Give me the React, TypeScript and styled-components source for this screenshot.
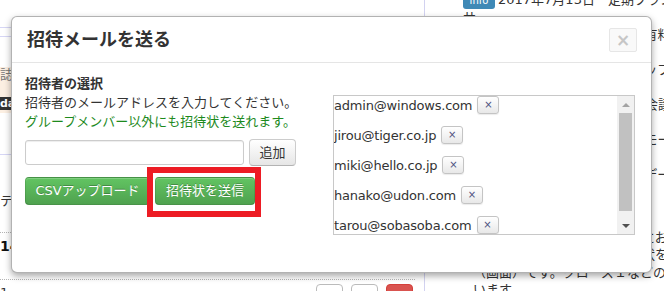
import React from "react";
import styled, { createGlobalStyle } from "styled-components";

const GlobalStyle = createGlobalStyle`
  html, body {
    margin: 0;
    padding: 0;
  }
  body {
    width: 664px;
    height: 291px;
    overflow: hidden;
    background: #fff;
    color: #333;
    font-family: "DejaVu Sans", "Noto Sans CJK JP", sans-serif;
    font-size: 13px;
  }
  * {
    box-sizing: border-box;
  }
`;

/* ---------- page behind the dialog ---------- */

const Page = styled.div`
  position: relative;
  width: 664px;
  height: 291px;
  overflow: hidden;
  display: flex;
`;

const LeftPane = styled.div`
  flex: none;
  box-sizing: content-box;
  width: 415px;
  padding-right: 9px;
  border-right: 1px solid #d2d2f0;
`;

const HeadRow = styled.div`
  height: 28px;
  border-bottom: 1px solid #d6d6f5;
`;

const SubRow = styled.div`
  height: 9px;
  border-bottom: 1px solid #d6d6f5;
`;

const NoticeBlock = styled.div`
  margin-top: 30px;
  height: 46px;
  background: #fcefe2;
`;

const NoticeText = styled.div`
  line-height: 16px;
  color: #777;
  white-space: nowrap;
`;

const DarkTag = styled.span`
  display: inline-block;
  margin-top: 14px;
  padding: 0 4px 0 0;
  height: 13px;
  line-height: 13px;
  font-size: 11px;
  font-weight: bold;
  background: #333;
  color: #fff;
`;

const SectionRow = styled.div`
  height: 42px;
  border-bottom: 1px solid #d6d6f5;
`;

const TopicRow = styled.div<{ $height: number; $pad: number }>`
  height: ${(p) => p.$height}px;
  padding-top: ${(p) => p.$pad}px;
  border-bottom: 1px dotted #b5b5b5;
  line-height: 17px;
  white-space: nowrap;
  overflow: hidden;
`;

const CountText = styled.span`
  font-size: 14px;
  font-weight: bold;
  color: #111;
`;

const LastRow = styled.div`
  display: flex;
  justify-content: space-between;
  padding-top: 4px;
  line-height: 17px;
`;

const RowTools = styled.div`
  display: flex;
  gap: 8px;
  margin-right: 2px;
`;

const ToolButton = styled.span<{ $danger?: boolean }>`
  width: 27px;
  height: 22px;
  border-radius: 4px;
  border: 1px solid ${(p) => (p.$danger ? "#d43f3a" : "#bbb")};
  background: ${(p) => (p.$danger ? "#d9534f" : "#fff")};
`;

const RightPane = styled.div`
  flex: 1;
  min-width: 0;
  overflow: hidden;
  padding-left: 38px;
`;

const NewsBlock = styled.div<{ $offset: number; $indent?: number }>`
  margin-top: ${(p) => p.$offset}px;
  padding-left: ${(p) => p.$indent ?? 0}px;
  line-height: 17.5px;
  color: #333;
`;

const NewsLine = styled.div`
  white-space: nowrap;
  height: 17.5px;
`;

const InfoBadge = styled.span`
  display: inline-block;
  vertical-align: middle;
  width: 32px;
  height: 16px;
  margin-right: 3px;
  border-radius: 3px;
  background: #3f89b6;
  color: #fff;
  font-size: 10px;
  line-height: 16px;
  text-align: center;
`;

/* ---------- dialog ---------- */

const Modal = styled.div`
  position: absolute;
  left: 11px;
  top: 16px;
  width: 641px;
  height: 257px;
  background: #fff;
  border: 1px solid rgba(0, 0, 0, 0.3);
  border-radius: 6px;
  box-shadow: 0 3px 7px rgba(0, 0, 0, 0.35);
`;

const ModalHeader = styled.div`
  height: 46px;
  display: flex;
  align-items: center;
  justify-content: space-between;
  padding: 0 14px 0 15px;
  border-bottom: 1px solid #e5e5e5;
`;

const ModalTitle = styled.h3`
  margin: 0;
  font-size: 18px;
  font-weight: bold;
  line-height: 24px;
  color: #333;
`;

const CloseButton = styled.button`
  width: 28px;
  height: 24px;
  padding: 0;
  border: 1px solid #e6e6e6;
  border-radius: 2px;
  background: #f9f9f9;
  color: #c6c6c6;
  font-family: "DejaVu Sans", sans-serif;
  font-size: 17px;
  font-weight: bold;
  line-height: 20px;
`;

const ModalBody = styled.div`
  display: flex;
  padding: 11px 0 0 13px;
`;

const FormColumn = styled.div`
  flex: 0 0 308px;
`;

const SectionTitle = styled.div`
  font-weight: bold;
  line-height: 19px;
`;

const HelpText = styled.div<{ $tone?: "green" }>`
  line-height: 19px;
  white-space: nowrap;
  color: ${(p) => (p.$tone === "green" ? "#1d8a1d" : "#333")};
`;

const InputRow = styled.div`
  display: flex;
  align-items: center;
  gap: 5px;
  margin-top: 8px;
`;

const EmailInput = styled.input`
  width: 219px;
  height: 25px;
  padding: 2px 6px;
  border: 1px solid #ccc;
  border-radius: 3px;
  box-shadow: inset 0 1px 1px rgba(0, 0, 0, 0.075);
  font: inherit;
`;

const GrayButton = styled.button`
  width: 47px;
  height: 27px;
  padding: 0;
  border: 1px solid #ccc;
  border-bottom-color: #b3b3b3;
  border-radius: 4px;
  background: linear-gradient(#ffffff, #e6e6e6);
  color: #333;
  font: inherit;
  line-height: 25px;
`;

const ActionRow = styled.div`
  display: flex;
  gap: 5px;
  margin-top: 11px;
`;

const GreenButton = styled.button<{ $width: number }>`
  width: ${(p) => p.$width}px;
  height: 28px;
  padding: 0;
  border: 1px solid;
  border-color: rgba(0, 0, 0, 0.1) rgba(0, 0, 0, 0.1) rgba(0, 0, 0, 0.25);
  border-radius: 4px;
  background: linear-gradient(#62c462, #4fa24f);
  box-shadow: inset 0 1px 0 rgba(255, 255, 255, 0.2);
  color: #fff;
  text-shadow: 0 -1px 0 rgba(0, 0, 0, 0.25);
  font: inherit;
  line-height: 26px;
  white-space: nowrap;
`;

const Marked = styled.div`
  position: relative;
`;

const Highlight = styled.span`
  position: absolute;
  left: -8px;
  top: -10px;
  width: 114px;
  height: 50px;
  border: 6px solid #ed1c24;
  pointer-events: none;
`;

const ListBox = styled.div`
  display: flex;
  width: 302px;
  height: 140px;
  margin-top: 21px;
  border: 1px solid #c8c8c8;
`;

const EmailList = styled.div`
  flex: 1;
  overflow: hidden;
`;

const EmailRow = styled.div`
  display: flex;
  align-items: center;
  height: 18px;
  margin-bottom: 12px;
  white-space: nowrap;
  letter-spacing: -0.2px;
`;

const RemoveButton = styled.button`
  width: 22px;
  height: 18px;
  margin-left: 5px;
  padding: 0;
  border: 1px solid #c4c4c4;
  border-radius: 3px;
  background: linear-gradient(#ffffff, #e8e8e8);
  box-shadow: 0 1px 1px rgba(0, 0, 0, 0.08);
  color: #4d5080;
  font-family: "DejaVu Sans", sans-serif;
  font-size: 10px;
  line-height: 16px;
  letter-spacing: 0;
`;

const ScrollBar = styled.div`
  flex: 0 0 17px;
  display: flex;
  flex-direction: column;
  background: #f1f1f1;
`;

const ArrowCell = styled.div`
  height: 17px;
  display: flex;
  align-items: center;
  justify-content: center;
  &:last-child {
    margin-top: auto;
  }
`;

const Arrow = styled.span<{ $down?: boolean }>`
  width: 0;
  height: 0;
  border-left: 4px solid transparent;
  border-right: 4px solid transparent;
  ${(p) =>
    p.$down
      ? "border-top: 4px solid #505050;"
      : "border-bottom: 4px solid #a3a3a3;"}
`;

const Thumb = styled.div`
  height: 98px;
  margin: 0 2px;
  background: #c1c1c1;
`;

const invitees = [
  "admin@windows.com",
  "jirou@tiger.co.jp",
  "miki@hello.co.jp",
  "hanako@udon.com",
  "tarou@sobasoba.com",
  "jun@example.jp",
];

export default function App() {
  return (
    <>
      <GlobalStyle />
      <Page>
        <LeftPane>
          <HeadRow />
          <SubRow />
          <NoticeBlock>
            <NoticeText>誌面掲載のお知らせ</NoticeText>
            <DarkTag>data</DarkTag>
          </NoticeBlock>
          <SectionRow />
          <TopicRow $height={78} $pad={37}>
            テスト用のグループです
          </TopicRow>
          <TopicRow $height={47} $pad={5}>
            <CountText>14</CountText>
          </TopicRow>
          <LastRow>
            <span>1</span>
            <RowTools>
              <ToolButton />
              <ToolButton />
              <ToolButton $danger />
            </RowTools>
          </LastRow>
        </LeftPane>

        <RightPane>
          <NewsBlock $offset={-9}>
            <NewsLine>
              <InfoBadge>info</InfoBadge>2017年7月13日　定期ブランチ開催のお知らせ
            </NewsLine>
            <NewsLine>サ</NewsLine>
            <NewsLine>株式会社サンプルの新プランは有料となります</NewsLine>
            <NewsLine>詳細はこちら</NewsLine>
            <NewsLine>グループウェアの機能を順次アップデートします</NewsLine>
            <NewsLine>ご確認ください</NewsLine>
            <NewsLine>来週からは全社員を対象とした会議を開催します</NewsLine>
            <NewsLine>ご参加ください</NewsLine>
            <NewsLine>スマートフォン向けアプリの新モードを追加しました</NewsLine>
            <NewsLine>ご利用ください</NewsLine>
            <NewsLine>システムのメンテナンスに伴いデータ移行を行います</NewsLine>
          </NewsBlock>
          <NewsBlock $offset={10} $indent={10}>
            <NewsLine>日程の詳細について</NewsLine>
            <NewsLine>ご案内します。</NewsLine>
            <NewsLine>社内ポータルのトップページにお知らせを掲載</NewsLine>
            <NewsLine>参加予定の方は、事前に招待状を確認してください</NewsLine>
            <NewsLine>（画面）です。クローズ１などのデータ</NewsLine>
            <NewsLine>います。</NewsLine>
          </NewsBlock>
        </RightPane>

        <Modal>
          <ModalHeader>
            <ModalTitle>招待メールを送る</ModalTitle>
            <CloseButton>×</CloseButton>
          </ModalHeader>
          <ModalBody>
            <FormColumn>
              <SectionTitle>招待者の選択</SectionTitle>
              <HelpText>招待者のメールアドレスを入力してください。</HelpText>
              <HelpText $tone="green">
                グループメンバー以外にも招待状を送れます。
              </HelpText>
              <InputRow>
                <EmailInput type="text" />
                <GrayButton>追加</GrayButton>
              </InputRow>
              <ActionRow>
                <GreenButton $width={125}>CSVアップロード</GreenButton>
                <Marked>
                  <GreenButton $width={100}>招待状を送信</GreenButton>
                  <Highlight />
                </Marked>
              </ActionRow>
            </FormColumn>
            <ListBox>
              <EmailList>
                {invitees.map((mail) => (
                  <EmailRow key={mail}>
                    {mail}
                    <RemoveButton>×</RemoveButton>
                  </EmailRow>
                ))}
              </EmailList>
              <ScrollBar>
                <ArrowCell>
                  <Arrow />
                </ArrowCell>
                <Thumb />
                <ArrowCell>
                  <Arrow $down />
                </ArrowCell>
              </ScrollBar>
            </ListBox>
          </ModalBody>
        </Modal>
      </Page>
    </>
  );
}
